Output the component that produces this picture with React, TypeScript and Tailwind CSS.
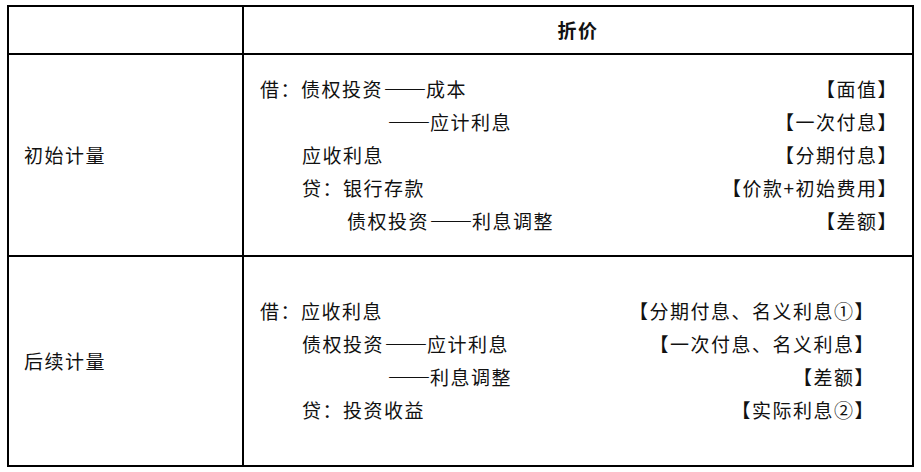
type Line = { indent: number; left: string; right?: string }

const initial: Line[] = [
  { indent: 0, left: '借：债权投资——成本', right: '【面值】' },
  { indent: 127, left: '——应计利息', right: '【一次付息】' },
  { indent: 42, left: '应收利息', right: '【分期付息】' },
  { indent: 42, left: '贷：银行存款', right: '【价款+初始费用】' },
  { indent: 87, left: '债权投资——利息调整', right: '【差额】' },
]

const later: Line[] = [
  { indent: 0, left: '借：应收利息', right: '【分期付息、名义利息①】' },
  { indent: 42, left: '债权投资——应计利息', right: '【一次付息、名义利息】' },
  { indent: 127, left: '——利息调整', right: '【差额】' },
  { indent: 42, left: '贷：投资收益', right: '【实际利息②】' },
]

// the source doc's dashes are wider than Noto's, so stretch them a bit
function Text({ s }: { s: string }) {
  const parts = s.split('——')
  return (
    <>
      {parts.map((p, i) => (
        <span key={i}>
          {i > 0 && (
            <span className="inline-block mx-[2.5px] scale-x-[1.13] tracking-[0px] font-semibold [font-feature-settings:'fwid']">
              ——
            </span>
          )}
          {p}
        </span>
      ))}
    </>
  )
}

function Entries({ lines, right }: { lines: Line[]; right: string }) {
  return (
    <div className={`flex flex-col justify-center h-full pl-[16px] ${right}`}>
      {lines.map((l, i) => (
        <div key={i} className="flex items-center justify-between h-[33px]">
          <span style={{ paddingLeft: l.indent }}>
            <Text s={l.left} />
          </span>
          <span>{l.right}</span>
        </div>
      ))}
    </div>
  )
}

export default function App() {
  return (
    <div
      className="w-[921px] h-[472px] bg-white pt-[5px] pl-[7px] text-[19px] tracking-[1.5px] text-[#111]"
      style={{ fontFamily: '"Noto Sans CJK SC", "Liberation Serif", serif' }}
    >
      <div className="w-[907px] h-[462px] border-2 border-black grid grid-cols-[235px_1fr] grid-rows-[48px_202px_208px]">
        <div className="border-r-2 border-b-2 border-black"></div>
        <div className="border-b-2 border-black flex items-center justify-center font-bold">
          折价
        </div>

        <div className="border-r-2 border-b-2 border-black flex items-center pl-[15px]">
          初始计量
        </div>
        <div className="border-b-2 border-black">
          <Entries lines={initial} right="pr-[14px]" />
        </div>

        <div className="border-r-2 border-black flex items-center pl-[15px]">
          后续计量
        </div>
        <div>
          <Entries lines={later} right="pr-[37px]" />
        </div>
      </div>
    </div>
  )
}
